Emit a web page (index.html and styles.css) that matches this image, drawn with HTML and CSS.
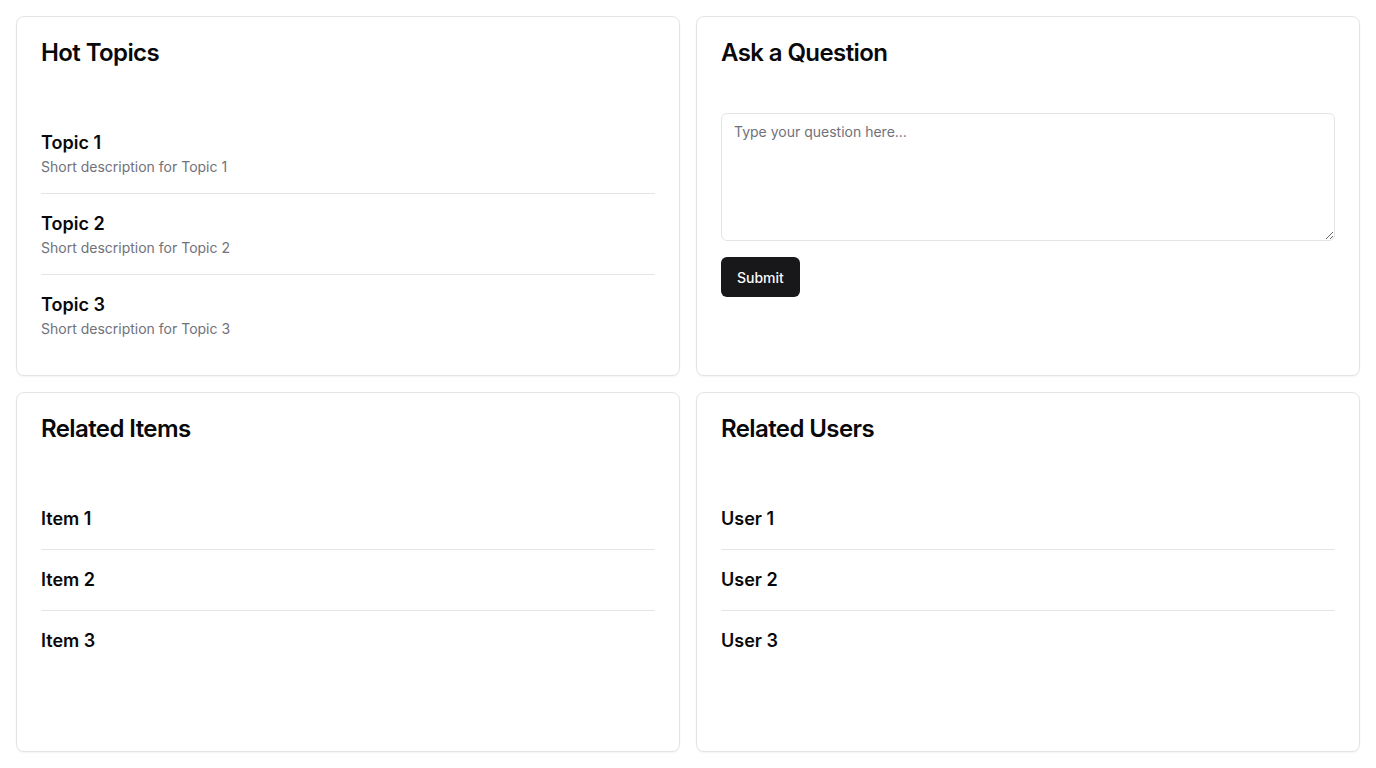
FILE: index.html
```html
<!DOCTYPE html>
<html>
<head>
<meta charset="utf-8">
<link rel="stylesheet" href="styles.css">
</head>
<body>
<main class="grid">
  <section class="card">
    <h2 class="card-title">Hot Topics</h2>
    <ul class="list">
      <li class="item"><h3 class="item-title">Topic 1</h3><p class="item-desc">Short description for Topic 1</p></li>
      <li class="item"><h3 class="item-title">Topic 2</h3><p class="item-desc">Short description for Topic 2</p></li>
      <li class="item"><h3 class="item-title">Topic 3</h3><p class="item-desc">Short description for Topic 3</p></li>
    </ul>
  </section>
  <section class="card">
    <h2 class="card-title">Ask a Question</h2>
    <form class="ask">
      <textarea class="textarea" placeholder="Type your question here..."></textarea>
      <button type="button" class="btn">Submit</button>
    </form>
  </section>
  <section class="card">
    <h2 class="card-title">Related Items</h2>
    <ul class="list">
      <li class="item"><h3 class="item-title">Item 1</h3></li>
      <li class="item"><h3 class="item-title">Item 2</h3></li>
      <li class="item"><h3 class="item-title">Item 3</h3></li>
    </ul>
  </section>
  <section class="card">
    <h2 class="card-title">Related Users</h2>
    <ul class="list">
      <li class="item"><h3 class="item-title">User 1</h3></li>
      <li class="item"><h3 class="item-title">User 2</h3></li>
      <li class="item"><h3 class="item-title">User 3</h3></li>
    </ul>
  </section>
</main>
</body>
</html>
```
FILE: styles.css
```css
* { box-sizing: border-box; }
html, body { margin: 0; padding: 0; background: #ffffff; }
body {
  font-family: Inter, "Liberation Sans", sans-serif;
  color: #09090b;
}
.grid {
  display: grid;
  grid-template-columns: 1fr 1fr;
  grid-template-rows: 1fr 1fr;
  gap: 16px;
  padding: 16px;
  height: 768px;
}
.card {
  border: 1px solid #e4e4e7;
  border-radius: 8px;
  background: #fff;
  box-shadow: 0 1px 2px rgba(0,0,0,0.05);
  padding: 24px;
  display: flex;
  flex-direction: column;
  min-height: 0;
}
.card-title {
  margin: 0 0 48px 0;
  font-size: 24px;
  line-height: 24px;
  font-weight: 600;
  letter-spacing: -0.6px;
}
.list { list-style: none; margin: 0; padding: 0; }
.item {
  padding: 16px 0;
  border-bottom: 1px solid #e4e4e7;
}
.item:last-child { border-bottom: none; }
.item-title {
  margin: 0;
  font-size: 18px;
  line-height: 28px;
  font-weight: 600;
}
.item-desc {
  margin: 0;
  font-size: 14px;
  line-height: 20px;
  color: #71717a;
}
.ask {
  display: flex;
  flex-direction: column;
  align-items: flex-start;
  gap: 16px;
}
.textarea {
  width: 100%;
  height: 128px;
  border: 1px solid #e4e4e7;
  border-radius: 6px;
  padding: 8px 12px;
  font-family: Inter, "Liberation Sans", sans-serif;
  font-size: 14px;
  line-height: 20px;
  color: #09090b;
  background: #fff;
  resize: vertical;
}
.textarea::placeholder { color: #71717a; }
.btn {
  height: 40px;
  padding: 0 16px;
  border: none;
  border-radius: 6px;
  background: #18181b;
  color: #fafafa;
  font-family: Inter, "Liberation Sans", sans-serif;
  font-size: 14px;
  font-weight: 500;
}
```
